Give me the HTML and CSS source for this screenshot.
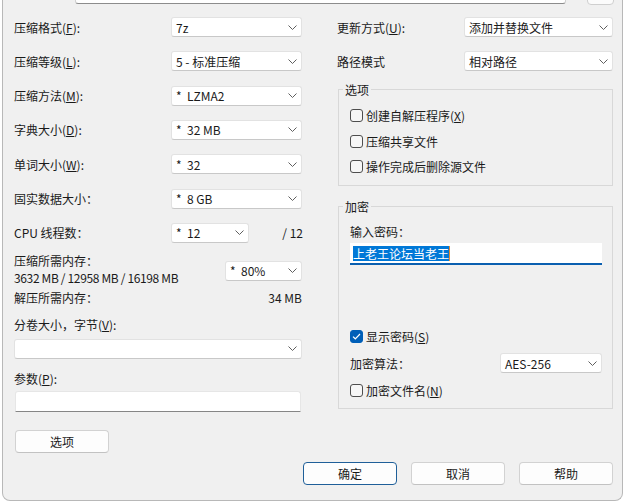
FILE: index.html
```html
<!DOCTYPE html>
<html lang="zh-CN">
<head>
<meta charset="utf-8">
<title>添加到压缩包</title>
<link rel="stylesheet" href="styles.css">
</head>
<body>
<div class="dialog">
  <div class="topstrip">
    <div class="top-field"></div>
    <div class="top-btn"></div>
  </div>
  <div class="main">
    <div class="col-left">
      <div class="grid7">
        <div class="row"><span class="label">压缩格式(<u>F</u>):</span><div class="combo c-std"><span class="val">7z</span><svg class="chev" width="9" height="5" viewBox="0 0 9 5"><path d="M0.5 0.5L4.5 4.5L8.5 0.5" fill="none" stroke="#5f5f5f" stroke-width="1"/></svg></div></div>
        <div class="row"><span class="label">压缩等级(<u>L</u>):</span><div class="combo c-std"><span class="val">5 - 标准压缩</span><svg class="chev" width="9" height="5" viewBox="0 0 9 5"><path d="M0.5 0.5L4.5 4.5L8.5 0.5" fill="none" stroke="#5f5f5f" stroke-width="1"/></svg></div></div>
        <div class="row"><span class="label">压缩方法(<u>M</u>):</span><div class="combo c-std"><span class="val">*&nbsp;&nbsp;LZMA2</span><svg class="chev" width="9" height="5" viewBox="0 0 9 5"><path d="M0.5 0.5L4.5 4.5L8.5 0.5" fill="none" stroke="#5f5f5f" stroke-width="1"/></svg></div></div>
        <div class="row"><span class="label">字典大小(<u>D</u>):</span><div class="combo c-std"><span class="val">*&nbsp;&nbsp;32 MB</span><svg class="chev" width="9" height="5" viewBox="0 0 9 5"><path d="M0.5 0.5L4.5 4.5L8.5 0.5" fill="none" stroke="#5f5f5f" stroke-width="1"/></svg></div></div>
        <div class="row"><span class="label">单词大小(<u>W</u>):</span><div class="combo c-std"><span class="val">*&nbsp;&nbsp;32</span><svg class="chev" width="9" height="5" viewBox="0 0 9 5"><path d="M0.5 0.5L4.5 4.5L8.5 0.5" fill="none" stroke="#5f5f5f" stroke-width="1"/></svg></div></div>
        <div class="row"><span class="label">固实数据大小：</span><div class="combo c-std"><span class="val">*&nbsp;&nbsp;8 GB</span><svg class="chev" width="9" height="5" viewBox="0 0 9 5"><path d="M0.5 0.5L4.5 4.5L8.5 0.5" fill="none" stroke="#5f5f5f" stroke-width="1"/></svg></div></div>
        <div class="row"><span class="label">CPU 线程数：</span><div class="combo c-cpu"><span class="val">*&nbsp;&nbsp;12</span><svg class="chev" width="9" height="5" viewBox="0 0 9 5"><path d="M0.5 0.5L4.5 4.5L8.5 0.5" fill="none" stroke="#5f5f5f" stroke-width="1"/></svg></div><span class="threads">/ 12</span></div>
      </div>
      <div class="mem">
        <div class="mem-text"><div>压缩所需内存：</div><div class="mem-nums">3632 MB / 12958 MB / 16198 MB</div></div>
        <div class="combo c-mem"><span class="val">*&nbsp;&nbsp;80%</span><svg class="chev" width="9" height="5" viewBox="0 0 9 5"><path d="M0.5 0.5L4.5 4.5L8.5 0.5" fill="none" stroke="#5f5f5f" stroke-width="1"/></svg></div>
      </div>
      <div class="line decomp"><span>解压所需内存：</span><span>34 MB</span></div>
      <div class="line vol-label">分卷大小，字节(<u>V</u>):</div>
      <div class="combo c-full"><span class="val"></span><svg class="chev" width="9" height="5" viewBox="0 0 9 5"><path d="M0.5 0.5L4.5 4.5L8.5 0.5" fill="none" stroke="#5f5f5f" stroke-width="1"/></svg></div>
      <div class="line param-label">参数(<u>P</u>):</div>
      <div class="textbox"></div>
      <button class="btn btn-opt">选项</button>
    </div>

    <div class="col-right">
      <div class="row"><span class="label rl">更新方式(<u>U</u>):</span><div class="combo c-right"><span class="val">添加并替换文件</span><svg class="chev" width="9" height="5" viewBox="0 0 9 5"><path d="M0.5 0.5L4.5 4.5L8.5 0.5" fill="none" stroke="#5f5f5f" stroke-width="1"/></svg></div></div>
      <div class="row r2"><span class="label rl">路径模式</span><div class="combo c-right"><span class="val">相对路径</span><svg class="chev" width="9" height="5" viewBox="0 0 9 5"><path d="M0.5 0.5L4.5 4.5L8.5 0.5" fill="none" stroke="#5f5f5f" stroke-width="1"/></svg></div></div>

      <fieldset class="group g-opts">
        <legend>选项</legend>
        <div class="chk"><span class="box"></span><span>创建自解压程序(<u>X</u>)</span></div>
        <div class="chk"><span class="box"></span><span>压缩共享文件</span></div>
        <div class="chk"><span class="box"></span><span>操作完成后删除源文件</span></div>
      </fieldset>

      <fieldset class="group g-enc">
        <legend>加密</legend>
        <div class="line">输入密码：</div>
        <div class="pwd"><span class="sel">上老王论坛当老王</span><span class="caret"></span></div>
        <div class="chk chk-show"><span class="box checked"><svg width="9" height="7" viewBox="0 0 9 7"><path d="M1 3.6L3.3 5.8L8 1" fill="none" stroke="#ffffff" stroke-width="1.2"/></svg></span><span>显示密码(<u>S</u>)</span></div>
        <div class="row enc-row"><span class="enc-label">加密算法：</span><div class="combo c-alg"><span class="val">AES-256</span><svg class="chev" width="9" height="5" viewBox="0 0 9 5"><path d="M0.5 0.5L4.5 4.5L8.5 0.5" fill="none" stroke="#5f5f5f" stroke-width="1"/></svg></div></div>
        <div class="chk chk-name"><span class="box"></span><span>加密文件名(<u>N</u>)</span></div>
      </fieldset>
    </div>
  </div>

  <div class="buttons">
    <button class="btn btn-default">确定</button>
    <button class="btn">取消</button>
    <button class="btn">帮助</button>
  </div>
</div>
</body>
</html>
```

FILE: styles.css
```css
* { box-sizing: border-box; }
html, body { margin: 0; padding: 0; }
body {
  background: #ffffff;
  width: 627px;
  height: 504px;
  overflow: hidden;
  font-family: "Noto Sans CJK SC", "Noto Sans", sans-serif;
  font-size: 12px;
  color: #1a1a1a;
}
u { text-decoration: underline; text-underline-offset: 1px; }

.dialog {
  margin-left: 2px;
  width: 621px;
  height: 501px;
  background: #f0f0f0;
  border: 1px solid #b8b8b8;
  border-top: none;
  border-radius: 0 0 8px 8px;
  display: flex;
  flex-direction: column;
}

.topstrip {
  height: 5px;
  overflow: hidden;
  display: flex;
  align-items: flex-end;
  padding-left: 72px;
}
.top-field {
  width: 491px;
  height: 20px;
  margin-bottom: 1px;
  background: #ffffff;
  border: 1px solid #d0d0d0;
  border-bottom-color: #8c8c8c;
  border-radius: 3px;
}
.top-btn {
  margin-left: 21px;
  width: 27px;
  height: 22px;
  background: #fbfbfb;
  border: 1px solid #cfcfcf;
  border-radius: 4px;
}

.main {
  display: grid;
  grid-template-columns: 288px 276px;
  column-gap: 35px;
  padding: 12px 0 0 11px;
}

.col-left { display: flex; flex-direction: column; align-items: flex-start; }
.col-right { display: flex; flex-direction: column; }

.grid7 {
  display: grid;
  grid-template-rows: repeat(7, 20px);
  row-gap: 14.33px;
  width: 288px;
}
.row { display: flex; align-items: center; height: 20px; }
.label { flex: none; width: 157px; line-height: 17px; white-space: nowrap; }
.label.rl { width: 127px; }
.r2 { margin-top: 14px; }

.combo {
  display: flex;
  align-items: center;
  height: 20px;
  background: #ffffff;
  border: 1px solid #e2e2e2;
  border-bottom-color: #c8c8c8;
  border-radius: 3px;
  padding-left: 4px;
  padding-right: 4px;
  white-space: nowrap;
}
.combo .val { flex: 1; line-height: 17px; }
.chev { flex: none; display: block; }
.c-std { width: 131px; }
.c-cpu { width: 78px; }
.threads { margin-left: auto; margin-right: -1px; line-height: 17px; }
.c-mem { width: 77px; margin-top: 9px; }
.c-full { width: 288px; margin-top: 6px; }
.c-right { width: 149px; }
.c-alg { width: 102px; }

.line { line-height: 17px; white-space: nowrap; }

.mem { display: flex; width: 288px; justify-content: space-between; align-items: flex-start; margin-top: 9px; }
.mem-text { line-height: 17px; white-space: nowrap; }
.mem-nums { letter-spacing: -0.35px; }
.decomp { display: flex; justify-content: space-between; width: 288px; margin-top: 3px; }
.vol-label { margin-top: 10px; }
.param-label { margin-top: 11px; }
.textbox {
  margin-top: 4px;
  margin-left: 1px;
  width: 286px;
  height: 21px;
  background: #ffffff;
  border: 1px solid #e6e6e6;
  border-bottom-color: #868686;
  border-radius: 3px 3px 0 0;
}

.btn {
  font-family: inherit;
  font-size: 12px;
  color: #1a1a1a;
  width: 94px;
  height: 23px;
  padding: 0;
  background: #fdfdfd;
  border: 1px solid #d2d2d2;
  border-bottom-color: #c2c2c2;
  border-radius: 4px;
  line-height: 17px;
}
.btn-opt { margin-top: 18px; margin-left: 1px; }
.btn-default { border-color: #1f5f99; }

.group {
  margin: 0;
  margin-left: 1px;
  padding: 0 10px 0 11px;
  border: 1px solid #d8d8d8;
  border-radius: 0;
  min-width: 0;
}
.group legend {
  line-height: 17px;
  padding: 0 2px;
  margin-left: -7px;
}
.g-opts { margin-top: 10px; padding-top: 9px; padding-bottom: 10px; }
.g-enc { margin-top: 12px; padding-top: 8px; padding-bottom: 9px; }

.chk { display: flex; align-items: center; height: 17px; line-height: 17px; white-space: nowrap; }
.chk + .chk { margin-top: 8.5px; }
.box {
  flex: none;
  width: 13px;
  height: 13px;
  margin-right: 3px;
  border: 1px solid #4d4d4d;
  border-radius: 3px;
  background: #f6f6f6;
  display: flex;
  align-items: center;
  justify-content: center;
}
.box.checked { background: #005fb8; border-color: #005fb8; }

.pwd {
  margin-top: 3px;
  height: 22px;
  background: #ffffff;
  border-bottom: 2px solid #0a5fb0;
  display: flex;
  align-items: center;
  padding-left: 3px;
}
.sel {
  background: #0078d7;
  color: #ffffff;
  line-height: 15px;
  height: 15px;
  letter-spacing: 0;
}
.caret { width: 1px; height: 15px; background: #e38a2e; }

.chk-show { margin-top: 63px; }
.enc-row { margin-top: 8px; justify-content: space-between; }
.enc-label { line-height: 17px; }
.chk-name { margin-top: 8.5px; }

.buttons {
  display: flex;
  justify-content: flex-end;
  gap: 14px;
  padding-right: 9px;
  margin-top: 9px;
}
```
